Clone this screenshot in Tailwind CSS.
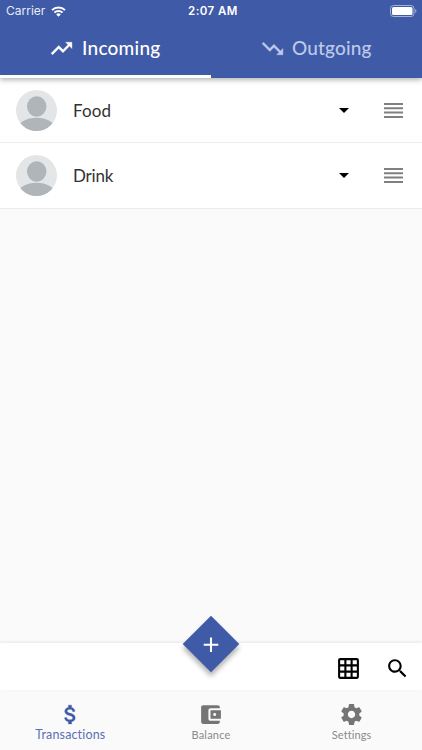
<!DOCTYPE html>
<html lang="en">
<head>
    <meta charset="UTF-8">
    <meta name="viewport" content="width=device-width, initial-scale=1.0">
    <title>Transactions</title>
    <script src="https://cdn.jsdelivr.net/npm/@tailwindcss/browser@4"></script>
</head>
<body class="flex h-screen flex-col overflow-hidden bg-[#fafafa] font-['Lato','Open_Sans',sans-serif] text-[#333] [font-variant-ligatures:none]">

    <!-- Header -->
    <header class="relative z-10 flex h-[78px] shrink-0 flex-col bg-[#3f5aa6] text-white shadow-[0_2px_5px_rgba(0,0,0,0.3)]">
        <div class="grid h-[22px] shrink-0 grid-cols-3 items-center pl-[6px] pr-[5px] font-['Inter',sans-serif]">
            <div class="flex items-center gap-[5px] text-[12px]">
                <span class="w-[40px] whitespace-nowrap text-[#e8ecf6]">Carrier</span>
                <svg class="h-[11px] w-[15px]" viewBox="0 0 15 11" fill="none" stroke="currentColor" stroke-width="2">
                    <path d="M1 4.1a9.2 9.2 0 0 1 13 0M3.4 6.6a5.8 5.8 0 0 1 8.2 0"/>
                    <path d="M7.5 10.8 5.2 8.4a3.3 3.3 0 0 1 4.6 0z" fill="currentColor" stroke="none"/>
                </svg>
            </div>
            <div class="whitespace-nowrap pl-[3px] pt-px text-center text-[11.5px] font-semibold tracking-[0.45px]">2:07 AM</div>
            <svg class="h-[12px] w-[27px] justify-self-end" viewBox="0 0 27 12">
                <rect x="0.5" y="0.5" width="23.5" height="11" rx="3" fill="none" stroke="#a4b1d6"/>
                <rect x="2" y="2" width="20.5" height="8" rx="1.5" fill="#fff"/>
                <path d="M25.2 4v4c1.7-.6 1.7-3.4 0-4z" fill="#a4b1d6"/>
            </svg>
        </div>
        <div class="grid flex-1 grid-cols-2">
            <div class="flex items-center gap-[8px] border-b-[3px] border-white pl-[49px]">
                <svg class="h-[25px] w-[25px] shrink-0" viewBox="0 0 24 24" fill="currentColor" stroke="currentColor" stroke-width="0.4"><path d="M16 6l2.29 2.29-4.88 4.88-4-4L2 16.59 3.41 18l6-6 4 4 6.3-6.29L22 12V6z"/></svg>
                <span class="text-[19px] font-medium tracking-[0.25px]">Incoming</span>
            </div>
            <div class="flex items-center gap-[7px] border-b-[3px] border-transparent pl-[49px] text-[#bdc9ea]">
                <svg class="h-[25px] w-[25px] shrink-0" viewBox="0 0 24 24" fill="currentColor" stroke="currentColor" stroke-width="0.4"><path d="M16 18l2.29-2.29-4.88-4.88-4 4L2 7.41 3.41 6l6 6 4-4 6.3 6.29L22 12v6z"/></svg>
                <span class="text-[19px] font-medium tracking-[0.15px]">Outgoing</span>
            </div>
        </div>
    </header>

    <!-- Category list -->
    <main class="flex-1">
        <div class="flex h-[65px] items-center border-b border-[#ececec] bg-white pl-4 pr-[19px]">
            <svg class="h-[41px] w-[41px]" viewBox="0 0 41 41">
                <clipPath id="avatar"><circle cx="20.5" cy="20.5" r="20.5"/></clipPath>
                <g clip-path="url(#avatar)">
                    <rect width="41" height="41" fill="#e3e5e6"/>
                    <ellipse cx="20.7" cy="16.5" rx="9.7" ry="10.3" fill="#afb5b9"/>
                    <ellipse cx="20.5" cy="38" rx="18" ry="10.3" fill="#afb5b9"/>
                </g>
            </svg>
            <span class="ml-4 pt-px text-[17px] tracking-[0.1px]">Food</span>
            <svg class="ml-auto h-[5px] w-[10px]" viewBox="0 0 10 5"><path d="M0 0h10L5 5z"/></svg>
            <svg class="ml-[35px] h-[15px] w-[19px]" viewBox="0 0 19 15" fill="#808080"><path d="M0 0h19v2H0zM0 4.3h19v2H0zM0 8.6h19v2H0zM0 12.9h19v2H0z"/></svg>
        </div>
        <div class="flex h-[66px] items-center border-b border-[#ececec] bg-white pl-4 pr-[19px]">
            <svg class="h-[41px] w-[41px]" viewBox="0 0 41 41">
                <g clip-path="url(#avatar)">
                    <rect width="41" height="41" fill="#e3e5e6"/>
                    <ellipse cx="20.7" cy="16.5" rx="9.7" ry="10.3" fill="#afb5b9"/>
                    <ellipse cx="20.5" cy="38" rx="18" ry="10.3" fill="#afb5b9"/>
                </g>
            </svg>
            <span class="ml-4 text-[17px] tracking-[-0.2px]">Drink</span>
            <svg class="ml-auto h-[5px] w-[10px]" viewBox="0 0 10 5"><path d="M0 0h10L5 5z"/></svg>
            <svg class="ml-[35px] h-[15px] w-[19px]" viewBox="0 0 19 15" fill="#808080"><path d="M0 0h19v2H0zM0 4.3h19v2H0zM0 8.6h19v2H0zM0 12.9h19v2H0z"/></svg>
        </div>
    </main>

    <!-- Toolbar with the add button -->
    <div class="relative flex h-[47px] shrink-0 items-center justify-end gap-6 bg-white pr-[12px] pt-1 text-black shadow-[0_-1px_3px_rgba(0,0,0,0.08)]">
        <button class="absolute left-[191px] top-[-19px] flex h-10 w-10 rotate-45 items-center justify-center bg-[#3f5aa6] shadow-[3px_3px_5px_rgba(0,0,0,0.3)]">
            <svg class="h-[25px] w-[25px] -rotate-45" viewBox="0 0 24 24" fill="#fff"><path d="M19 13h-6v6h-2v-6H5v-2h6V5h2v6h6v2z"/></svg>
        </button>
        <svg class="h-[25px] w-[25px]" viewBox="0 0 24 24" fill="currentColor"><path d="M20 2H4c-1.1 0-2 .9-2 2v16c0 1.1.9 2 2 2h16c1.1 0 2-.9 2-2V4c0-1.1-.9-2-2-2zM8 20H4v-4h4v4zm0-6H4v-4h4v4zm0-6H4V4h4v4zm6 12h-4v-4h4v4zm0-6h-4v-4h4v4zm0-6h-4V4h4v4zm6 12h-4v-4h4v4zm0-6h-4v-4h4v4zm0-6h-4V4h4v4z"/></svg>
        <svg class="h-[25px] w-[25px]" viewBox="0 0 24 24" fill="currentColor"><path d="M15.5 14h-.79l-.28-.27C15.41 12.59 16 11.11 16 9.5 16 5.91 13.09 3 9.5 3S3 5.91 3 9.5 5.91 16 9.5 16c1.61 0 3.09-.59 4.23-1.57l.27.28v.79l5 4.99L20.49 19l-4.99-5zm-6 0C7.01 14 5 11.99 5 9.5S7.01 5 9.5 5 14 7.01 14 9.5 11.99 14 9.5 14z"/></svg>
    </div>

    <!-- Bottom navigation -->
    <nav class="grid h-[60px] shrink-0 grid-cols-3 bg-[#fafafa] text-[#757575]">
        <div class="flex flex-col items-center pt-3 text-[#3f5aa6]">
            <svg class="h-[25px] w-[25px]" viewBox="0 0 24 24" fill="currentColor" stroke="currentColor" stroke-width="0.4"><path d="M11.8 10.9c-2.27-.59-3-1.2-3-2.15 0-1.09 1.01-1.85 2.7-1.85 1.78 0 2.44.85 2.5 2.1h2.21c-.07-1.72-1.12-3.3-3.21-3.81V3h-3v2.16c-1.94.42-3.5 1.68-3.5 3.61 0 2.31 1.91 3.46 4.7 4.13 2.5.6 3 1.48 3 2.41 0 .69-.49 1.79-2.7 1.79-2.06 0-2.87-.92-2.98-2.1h-2.2c.12 2.19 1.76 3.42 3.68 3.83V21h3v-2.15c1.95-.37 3.5-1.5 3.5-3.55 0-2.84-2.43-3.81-4.7-4.4z"/></svg>
            <span class="text-[12.5px] leading-4 tracking-[0.15px] text-[#5a70b1]">Transactions</span>
        </div>
        <div class="flex flex-col items-center pt-3">
            <svg class="h-[25px] w-[25px]" viewBox="0 0 24 24" fill="currentColor"><path d="M21 18v1c0 1.1-.9 2-2 2H5c-1.11 0-2-.9-2-2V5c0-1.1.89-2 2-2h14c1.1 0 2 .9 2 2v1h-9c-1.11 0-2 .9-2 2v8c0 1.1.89 2 2 2h9zm-9-2h10V8H12v8zm4-2.5c-.83 0-1.5-.67-1.5-1.5s.67-1.5 1.5-1.5 1.5.67 1.5 1.5-.67 1.5-1.5 1.5z"/></svg>
            <span class="text-[11px] leading-4 tracking-[0.2px] text-[#8a8a8a]">Balance</span>
        </div>
        <div class="flex flex-col items-center pt-3">
            <svg class="h-[25px] w-[25px]" viewBox="0 0 24 24" fill="currentColor"><path d="M19.43 12.98c.04-.32.07-.64.07-.98s-.03-.66-.07-.98l2.11-1.65c.19-.15.24-.42.12-.64l-2-3.46c-.12-.22-.39-.3-.61-.22l-2.49 1c-.52-.4-1.08-.73-1.69-.98l-.38-2.65C14.46 2.18 14.25 2 14 2h-4c-.25 0-.46.18-.49.42l-.38 2.65c-.61.25-1.17.59-1.69.98l-2.49-1c-.23-.09-.49 0-.61.22l-2 3.46c-.13.22-.07.49.12.64l2.11 1.65c-.04.32-.07.65-.07.98s.03.66.07.98l-2.11 1.65c-.19.15-.24.42-.12.64l2 3.46c.12.22.39.3.61.22l2.49-1c.52.4 1.08.73 1.69.98l.38 2.65c.03.24.24.42.49.42h4c.25 0 .46-.18.49-.42l.38-2.65c.61-.25 1.17-.59 1.69-.98l2.49 1c.23.09.49 0 .61-.22l2-3.46c.12-.22.07-.49-.12-.64l-2.11-1.65zM12 15.5c-1.93 0-3.5-1.57-3.5-3.5s1.57-3.5 3.5-3.5 3.5 1.57 3.5 3.5-1.57 3.5-3.5 3.5z"/></svg>
            <span class="text-[11px] leading-4 tracking-[0.1px] text-[#8a8a8a]">Settings</span>
        </div>
    </nav>

</body>
</html>
